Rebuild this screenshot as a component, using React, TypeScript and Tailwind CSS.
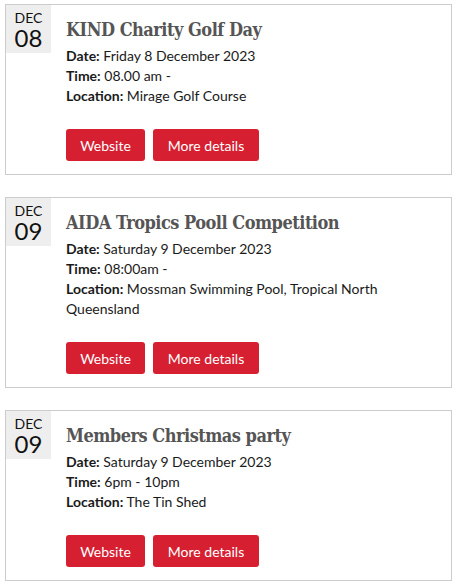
import React from "react";

type EventItem = {
  month: string;
  day: string;
  title: string;
  date: string;
  time: string;
  location: string;
};

const events: EventItem[] = [
  {
    month: "DEC",
    day: "08",
    title: "KIND Charity Golf Day",
    date: "Friday 8 December 2023",
    time: "08.00 am -",
    location: "Mirage Golf Course",
  },
  {
    month: "DEC",
    day: "09",
    title: "AIDA Tropics Pooll Competition",
    date: "Saturday 9 December 2023",
    time: "08:00am -",
    location: "Mossman Swimming Pool, Tropical North Queensland",
  },
  {
    month: "DEC",
    day: "09",
    title: "Members Christmas party",
    date: "Saturday 9 December 2023",
    time: "6pm - 10pm",
    location: "The Tin Shed",
  },
];

function EventCard({ event }: { event: EventItem }) {
  return (
    <div className="flex border border-[#cccccc] bg-white">
      <div className="flex h-[48px] w-[45px] shrink-0 flex-col items-center bg-[#eeeeee] pt-[5px] text-[#111]">
        <span className="text-[14px] leading-[16px]">{event.month}</span>
        <span className="text-[24px] leading-[24px]">{event.day}</span>
      </div>
      <div className="flex-1 pb-[13px] pl-[15px] pr-[15px] pt-[9px]">
        <h2
          className="text-[18px] font-bold leading-[32px] tracking-[-0.5px] text-[#555555]"
          style={{ fontFamily: '"DejaVu Serif Condensed", "DejaVu Serif", serif' }}
        >
          {event.title}
        </h2>
        <div className="text-[14px] leading-[20px] text-[#1a1a1a]">
          <p>
            <span className="font-bold">Date:</span> {event.date}
          </p>
          <p>
            <span className="font-bold">Time:</span> {event.time}
          </p>
          <p>
            <span className="font-bold">Location:</span> {event.location}
          </p>
        </div>
        <div className="mt-[23px] flex gap-[8px]">
          <a className="flex h-[32px] w-[79px] items-center justify-center rounded-[3px] bg-[#d61f31] text-[14px] text-white">
            Website
          </a>
          <a className="flex h-[32px] w-[106px] items-center justify-center rounded-[3px] bg-[#d61f31] text-[14px] text-white">
            More details
          </a>
        </div>
      </div>
    </div>
  );
}

export default function App() {
  return (
    <div
      className="flex min-h-[587px] flex-col gap-[22px] bg-white pl-[5px] pr-[6px] pt-[4px]"
      style={{ fontFamily: 'Lato, "Liberation Sans", sans-serif' }}
    >
      {events.map((event, i) => (
        <EventCard key={i} event={event} />
      ))}
    </div>
  );
}
